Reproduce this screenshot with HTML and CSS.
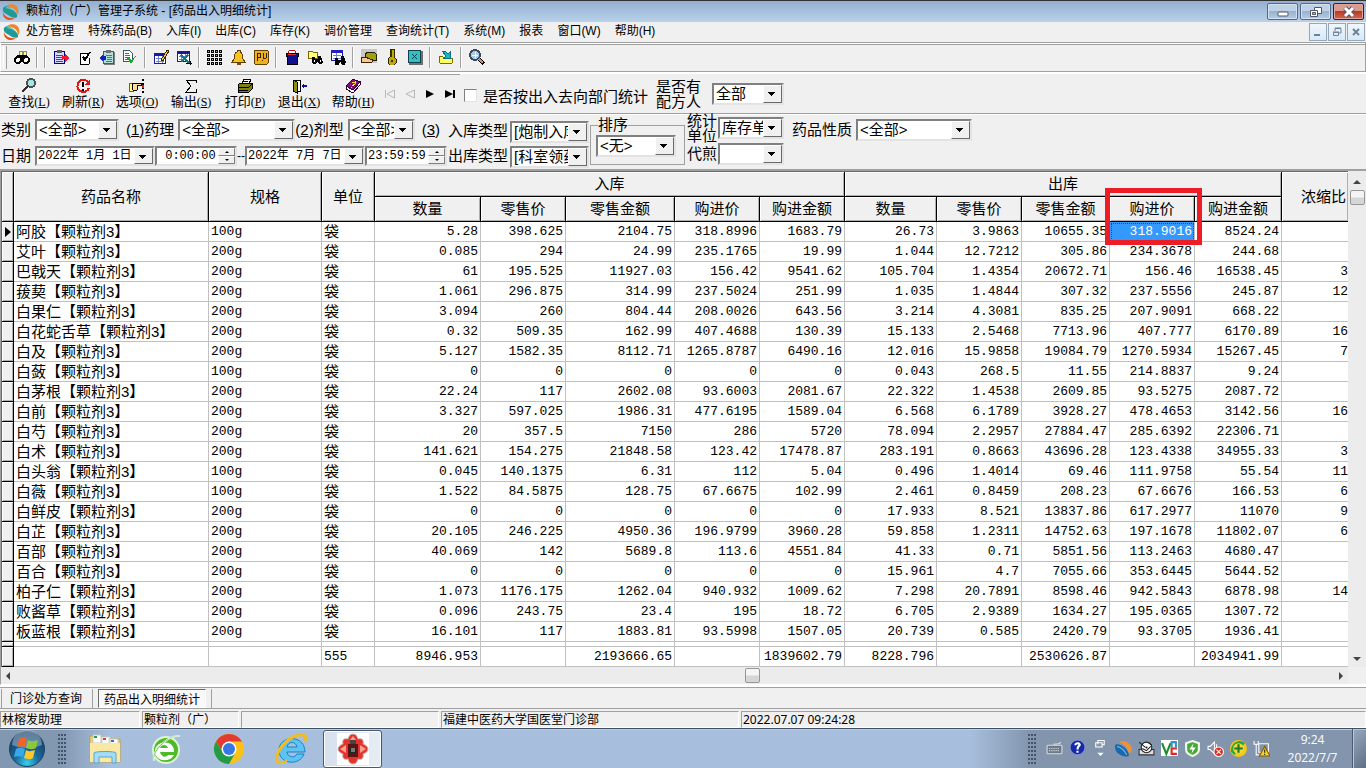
FILE: index.html
```
<!DOCTYPE html>
<html lang="zh-CN">

<head>
    <meta charset="UTF-8">
    <title>颗粒剂（广）管理子系统</title>
    <link rel="stylesheet" href="styles.css">
</head>

<body>
    <header class="titlebar">
        <svg class="logo" viewBox="0 0 18 18"><path d="M4 3C8 0 15 1 16 6c1 3 0 5-1 6 0-5-4-8-11-9z" fill="#f0852b"/><path d="M1 5c2-3 6-2 9 1s6 5 5 8c-3 2-6 0-9-2S0 9 1 5z" fill="#1f9a94"/><path d="M1 9c1 4 6 7 12 6-4 4-13 2-12-6z" fill="#e8501e"/><path d="M3 5c3-2 7 0 9 3-3-2-6-3-9-3z" fill="#7fd3c4"/></svg>
        <h1>颗粒剂（广）管理子系统 - [药品出入明细统计]</h1>
        <div class="win-buttons">
            <button type="button" aria-label="最小化"><svg viewBox="0 0 30 16"><rect x="10" y="8" width="10" height="4" rx="1" fill="#fff" stroke="#535666"/></svg></button>
            <button type="button" aria-label="还原"><svg viewBox="0 0 30 16"><path d="M13.500 3.500h7v6h-7z" fill="#fff" stroke="#535666"/><path d="M9.500 6.500h7v6h-7z" fill="#fff" stroke="#535666"/><path d="M11.500 8.500h3v2h-3z" fill="#9db8d5" stroke="#535666"/></svg></button>
            <button type="button" class="close" aria-label="关闭"><svg viewBox="0 0 30 16"><path d="M11 4l8 8M19 4l-8 8" stroke="#535666" stroke-width="5"/><path d="M11 4l8 8M19 4l-8 8" stroke="#fff" stroke-width="3"/></svg></button>
        </div>
    </header>

    <nav class="menubar">
        <svg class="logo" viewBox="0 0 18 18"><path d="M4 3C8 0 15 1 16 6c1 3 0 5-1 6 0-5-4-8-11-9z" fill="#f0852b"/><path d="M1 5c2-3 6-2 9 1s6 5 5 8c-3 2-6 0-9-2S0 9 1 5z" fill="#1f9a94"/><path d="M1 9c1 4 6 7 12 6-4 4-13 2-12-6z" fill="#e8501e"/><path d="M3 5c3-2 7 0 9 3-3-2-6-3-9-3z" fill="#7fd3c4"/></svg>
        <a href="#">处方管理</a>
        <a href="#">特殊药品(B)</a>
        <a href="#">入库(I)</a>
        <a href="#">出库(C)</a>
        <a href="#">库存(K)</a>
        <a href="#">调价管理</a>
        <a href="#">查询统计(T)</a>
        <a href="#">系统(M)</a>
        <a href="#">报表</a>
        <a href="#">窗口(W)</a>
        <a href="#">帮助(H)</a>
        <div class="mdi-buttons">
            <button type="button" aria-label="最小化窗口"><svg viewBox="0 0 16 16"><path d="M4 10h6v2H4z" fill="#6f8296"/></svg></button>
            <button type="button" aria-label="还原窗口"><svg viewBox="0 0 16 16"><path d="M6 7V4.500h6V9h-2M6 4h6" fill="none" stroke="#6f8296"/><path d="M4.500 8.500h5v3h-5zM4 8h6" fill="none" stroke="#6f8296"/></svg></button>
            <button type="button" aria-label="关闭窗口"><svg viewBox="0 0 16 16"><path d="M5 5l6 6M11 5l-6 6" stroke="#6f8296" stroke-width="2"/></svg></button>
        </div>
    </nav>

    <div class="iconbar">
        <button type="button" aria-label="查找"><svg viewBox="0 0 16 16"><path d="M5 2h3v4H5zM9 2h3v4H9z" fill="#ffff80" stroke="#888"/><path d="M3 6h10v3H3z" fill="#000"/><circle cx="4" cy="11" r="3" fill="#fff" stroke="#000" stroke-width="2"/><circle cx="12" cy="11" r="3" fill="#fff" stroke="#000" stroke-width="2"/></svg></button>
        <i class="sep"></i><i class="sep"></i>
        <button type="button" aria-label="单据"><svg viewBox="0 0 16 16"><path d="M1.500 2.500h10v12h-10z" fill="#d8d8ff" stroke="#000080"/><path d="M4 1h5v3H4z" fill="#606060"/><path d="M3 6h7M3 8h6M3 10h7M3 12h7" stroke="#4040c0"/><path d="M9 7h3V5l4 4-4 4v-3H9z" fill="#f01830"/></svg></button>
        <button type="button" aria-label="审核"><svg viewBox="0 0 16 16"><path d="M13 4H4v11h9" fill="#fff" stroke="#000"/><path d="M6 8l3 5 6-10-2 0-4 6-1-2z" fill="#000"/><path d="M13 9v6" stroke="#000"/></svg></button>
        <button type="button" aria-label="导入"><svg viewBox="0 0 16 16"><path d="M5 3h11v13H5z" fill="#808080"/><path d="M4.500 2.500h10v12h-10z" fill="#b0e0d8" stroke="#406060"/><path d="M7 1h5v3H7z" fill="#707070"/><path d="M7 6h6M8 8h5M8 10h5M7 12h6" stroke="#408078"/><path d="M7 7H4V5L0 9l4 4v-2h3z" fill="#1020c0"/></svg></button>
        <button type="button" aria-label="确认"><svg viewBox="0 0 16 16"><path d="M1.500 1.500h6l3 3v8h-9z" fill="#fff" stroke="#306060"/><path d="M3 4h4M3 6h5M3 8h5M3 10h4" stroke="#307878"/><path d="M5 9l4 6 7-11-7 7-2-3z" fill="#10b020"/></svg></button>
        <i class="sep"></i>
        <button type="button" aria-label="编辑"><svg viewBox="0 0 16 16"><path d="M1.500 4.500h11v10h-11z" fill="#fff" stroke="#1818a0"/><path d="M1 4h12v3H1z" fill="#1818a0"/><path d="M3 9h8M3 12h8M5 7v7M9 7v7" stroke="#7080d0"/><path d="M8 11l6-10 2 1-6 10z" fill="#f0d020" stroke="#402000"/></svg></button>
        <button type="button" aria-label="报表设计"><svg viewBox="0 0 16 16"><path d="M1.500 2.500h12v10h-12z" fill="#fff" stroke="#1818a0"/><path d="M1 2h13v3H1z" fill="#1818a0"/><path d="M3 7h9M3 10h8M5 5v7M9 5v7" stroke="#7080d0"/><path d="M5 6l9 9M12 6l-7 7" stroke="#008080" stroke-width="2"/><path d="M10 14h6M14 12v4" stroke="#000"/></svg></button>
        <i class="sep"></i>
        <button type="button" aria-label="药柜"><svg viewBox="0 0 16 16"><path d="M0 2h16M0 6h16M0 10h16M0 14h16" stroke="#000" stroke-width="3" stroke-dasharray="3 1"/><path d="M1 2h16M1 6h16M1 10h16M1 14h16" stroke="#f0a030" stroke-dasharray="1 3"/></svg></button>
        <button type="button" aria-label="提醒"><svg viewBox="0 0 16 16"><path d="M7 1h3v2c3 1 3 4 3 7l2 3H2l2-3c0-3 0-6 3-7z" fill="#f8c020" stroke="#604000"/><path d="M7 14h4v2H7z" fill="#805000"/></svg></button>
        <button type="button" aria-label="PV"><svg viewBox="0 0 16 16"><rect x="1" y="1" width="14" height="14" rx="1" fill="#f0b020" stroke="#604000"/><path d="M4 12V4h3v4H4M9 11h1M10 4v5l2 1 1-1V4" fill="none" stroke="#302000"/></svg></button>
        <i class="sep"></i>
        <button type="button" aria-label="药桶"><svg viewBox="0 0 16 16"><path d="M4 4c0-4 8-4 8 0" fill="#fff" stroke="#c01010"/><path d="M2 4h12v3h-1v8H3V7H2z" fill="#101090" stroke="#000"/><path d="M4 5h8" stroke="#e03030"/></svg></button>
        <button type="button" aria-label="查找单据"><svg viewBox="0 0 16 16"><path d="M1 2h4l1 1h4v6H1z" fill="#ffff80" stroke="#806000"/><path d="M5 8h3v2h3V7h3l2 6-1 2h-3l-1-2h-1l-1 2H6l-1-3z" fill="#000"/><path d="M7 11h1v2H7zM13 11h1v2h-1z" fill="#fff"/></svg></button>
        <button type="button" aria-label="查找报表"><svg viewBox="0 0 16 16"><path d="M1.500 1.500h11v10h-11z" fill="#fff" stroke="#1818a0"/><path d="M1 1h12v3H1z" fill="#2020c0"/><path d="M3 6h8M3 9h8M6 4v7" stroke="#7080d0"/><path d="M5 9h3v2h3V7h3l2 6-1 3h-3l-1-3h-1l-1 3H5z" fill="#000"/></svg></button>
        <i class="sep"></i>
        <button type="button" aria-label="钱包"><svg viewBox="0 0 16 16"><path d="M0 0h16v14H0z" fill="#c8c8c8"/><path d="M4 5l3-2h6l2 2v6H4z" fill="#a0a010" stroke="#202000"/><path d="M0 9l4-1 5 2 3 1-1 2H0z" fill="#f8c890" stroke="#402000"/></svg></button>
        <button type="button" aria-label="锁定"><svg viewBox="0 0 16 16"><path d="M6 0h4v8l2 2v4l-2 2H6l-2-2v-4l2-2z" fill="#c0a810" stroke="#302800"/><path d="M7 11h2v2H7zM7 1h1v7H7z" fill="#403800"/></svg></button>
        <button type="button" aria-label="关闭"><svg viewBox="0 0 16 16"><path d="M2 2h14v14H2z" fill="#707070"/><path d="M1.500 1.500h12v12h-12z" fill="#30c0c0" stroke="#104050"/><path d="M5 5l5 5M10 5l-5 5" stroke="#104050"/></svg></button>
        <i class="sep"></i>
        <button type="button" aria-label="打开"><svg viewBox="0 0 16 16"><path d="M1 7h3l2 2h9l-1 5H2z" fill="#ffff60" stroke="#806800"/><path d="M4 2h3l3 3 2-2v6H6l2-2z" fill="#10b8c0" stroke="#087080"/></svg></button>
        <i class="sep"></i>
        <button type="button" aria-label="放大"><svg viewBox="0 0 16 16"><circle cx="6" cy="6" r="5" fill="#a8c8e8" stroke="#404860" stroke-width="2"/><path d="M6 3v6M3 6h6" stroke="#f8fcff"/><path d="M10 10l5 5" stroke="#000" stroke-width="4"/><path d="M10 10l4 4" stroke="#d09070" stroke-width="2"/></svg></button>
    </div>

    <div class="actionbar">
        <div class="actions">
            <button type="button"><svg viewBox="0 0 16 16"><circle cx="10" cy="5" r="4" fill="#a0e8e8" stroke="#505050" stroke-width="2"/><path d="M7 8l-6 6" stroke="#303030" stroke-width="2"/></svg><span>查找<small>(<u>L</u>)</small></span></button>
            <button type="button"><svg viewBox="0 0 16 16"><path d="M13 4A6 6 0 1 0 14 10" fill="none" stroke="#f01010" stroke-width="2"/><path d="M15 1v6H9z" fill="#f01010"/><path d="M8 4v5M8 11v2" stroke="#000" stroke-width="2"/></svg><span>刷新<small>(<u>R</u>)</small></span></button>
            <button type="button"><svg viewBox="0 0 16 16"><path d="M0 5h4v8H0z" fill="#ffff80" stroke="#806000"/><path d="M3 6l3-1h6v2H8l1 2-1 3H4z" fill="#f8e090" stroke="#000"/><path d="M14 1v14" stroke="#000" stroke-width="2" stroke-dasharray="2 2"/><path d="M14 7v3" stroke="#f01010" stroke-width="2"/></svg><span>选项<small>(<u>O</u>)</small></span></button>
            <button type="button"><svg viewBox="0 0 16 16"><path d="M13 5V2H3l5 6-5 6h10v-3" fill="none" stroke="#000"/></svg><span>输出<small>(<u>S</u>)</small></span></button>
            <button type="button"><svg viewBox="0 0 16 16"><path d="M5 6l2-5h7l-2 5z" fill="#fff" stroke="#000"/><path d="M7 3h4M6 5h4" stroke="#000"/><path d="M1 7l2-2h12v6l-3 3H1z" fill="#808010" stroke="#000"/><path d="M1 9h11M2 12h9M12 9l3-3" stroke="#000"/></svg><span>打印<small>(<u>P</u>)</small></span></button>
            <button type="button"><svg viewBox="0 0 16 16"><path d="M2 2h7v11H2" fill="#fff" stroke="#000"/><path d="M2 2l4 2v11l-4-2z" fill="#909010" stroke="#000"/><path d="M11 8h5" stroke="#1010a0" stroke-width="2"/><path d="M10 8l3-3v6z" fill="#1010a0"/></svg><span>退出<small>(<u>X</u>)</small></span></button>
            <button type="button"><svg viewBox="0 0 16 16"><path d="M1 8l7-7 7 3-7 8z" fill="#801080" stroke="#300030"/><path d="M1 8v3l7 4 7-8V4l-7 8z" fill="#fff" stroke="#300030"/><path d="M7 5l3-1v2L7 8M6 9h1" fill="none" stroke="#ffe020"/></svg><span>帮助<small>(<u>H</u>)</small></span></button>
        </div>
        <div class="record-nav">
            <button type="button" disabled aria-label="首条"><svg viewBox="0 0 12 10"><path d="M1.500 1v8M10.500 1v8L3 5z" fill="none" stroke="#b8b8b8"/></svg></button>
            <button type="button" disabled aria-label="上一条"><svg viewBox="0 0 12 10"><path d="M10.500 1v8L2 5z" fill="none" stroke="#b8b8b8"/></svg></button>
            <button type="button" aria-label="下一条"><svg viewBox="0 0 12 10"><path d="M2 1l8 4-8 4z"/></svg></button>
            <button type="button" aria-label="末条"><svg viewBox="0 0 12 10"><path d="M1 1l8 4-8 4zM9 1h2v8H9z"/></svg></button>
        </div>
        <label class="check"><input type="checkbox">是否按出入去向部门统计</label>
        <label class="two-line" for="formula">是否有<br>配方人</label>
        <div class="combo formula"><select id="formula"><option>全部</option></select></div>
    </div>

    <form class="filters">
        <div class="filter-main">
            <div class="filter-row">
                <label for="category">类别</label>
                <div class="combo category"><select id="category"><option>&lt;全部&gt;</option></select></div>
                <label class="lead" for="effect">(<u>1</u>)药理</label>
                <div class="combo effect"><select id="effect"><option>&lt;全部&gt;</option></select></div>
                <label for="dosage">(<u>2</u>)剂型</label>
                <div class="combo dosage"><select id="dosage"><option>&lt;全部&gt;</option></select></div>
                <span class="lead">(<u>3</u>)</span>
            </div>
            <div class="filter-row dates">
                <label for="date-from">日期</label>
                <div class="combo date"><input type="text" id="date-from" value="2022年 1月 1日"></div>
                <div class="spin"><input type="text" aria-label="开始时间" value=" 0:00:00"><span class="spin-buttons"><button type="button" aria-label="增加"></button><button type="button" class="down" aria-label="减少"></button></span></div>
                <span class="dash">--</span>
                <div class="combo date"><input type="text" aria-label="结束日期" value="2022年 7月 7日"></div>
                <div class="spin"><input type="text" aria-label="结束时间" value="23:59:59"><span class="spin-buttons"><button type="button" aria-label="增加"></button><button type="button" class="down" aria-label="减少"></button></span></div>
            </div>
        </div>
        <div class="filter-types">
            <label for="in-type">入库类型</label>
            <div class="combo"><select id="in-type"><option>[炮制入库]</option></select></div>
            <label for="out-type">出库类型</label>
            <div class="combo"><select id="out-type"><option>[科室领药]</option></select></div>
        </div>
        <fieldset class="sort">
            <legend>排序</legend>
            <div class="combo"><select aria-label="排序"><option>&lt;无&gt;</option></select></div>
        </fieldset>
        <div class="filter-stat">
            <label class="two-line" for="stat-unit">统计<br>单位</label>
            <div class="combo"><select id="stat-unit"><option>库存单位</option></select></div>
            <label for="decoct">代煎</label>
            <div class="combo"><select id="decoct"><option></option></select></div>
        </div>
        <div class="filter-row nature">
            <label for="nature">药品性质</label>
            <div class="combo"><select id="nature"><option>&lt;全部&gt;</option></select></div>
        </div>
    </form>

    <main class="grid">
        <div class="grid-view">
            <table>
                <colgroup>
                    <col class="w-mark"><col class="w-name"><col class="w-spec"><col class="w-unit">
                    <col class="w-in-qty"><col class="w-price"><col class="w-in-sum"><col class="w-price"><col class="w-price">
                    <col class="w-out-qty"><col class="w-price"><col class="w-out-sum"><col class="w-price"><col class="w-out-buy">
                    <col>
                </colgroup>
                <thead>
                    <tr>
                        <th rowspan="2"></th><th rowspan="2">药品名称</th><th rowspan="2">规格</th><th rowspan="2">单位</th>
                        <th colspan="5">入库</th><th colspan="5">出库</th><th rowspan="2" class="ratio">浓缩比</th>
                    </tr>
                    <tr>
                        <th>数量</th><th>零售价</th><th>零售金额</th><th>购进价</th><th>购进金额</th>
                        <th>数量</th><th>零售价</th><th>零售金额</th><th>购进价</th><th>购进金额</th>
                    </tr>
                </thead>
                <tbody>
                    <tr><th class="current"></th><td>阿胶【颗粒剂3】</td><td>100g</td><td>袋</td><td>5.28</td><td>398.625</td><td>2104.75</td><td>318.8996</td><td>1683.79</td><td>26.73</td><td>3.9863</td><td>10655.35</td><td class="selected">318.9016<span class="marker"></span></td><td>8524.24</td><td></td></tr>
                    <tr><th></th><td>艾叶【颗粒剂3】</td><td>200g</td><td>袋</td><td>0.085</td><td>294</td><td>24.99</td><td>235.1765</td><td>19.99</td><td>1.044</td><td>12.7212</td><td>305.86</td><td>234.3678</td><td>244.68</td><td></td></tr>
                    <tr><th></th><td>巴戟天【颗粒剂3】</td><td>200g</td><td>袋</td><td>61</td><td>195.525</td><td>11927.03</td><td>156.42</td><td>9541.62</td><td>105.704</td><td>1.4354</td><td>20672.71</td><td>156.46</td><td>16538.45</td><td>3</td></tr>
                    <tr><th></th><td>菝葜【颗粒剂3】</td><td>200g</td><td>袋</td><td>1.061</td><td>296.875</td><td>314.99</td><td>237.5024</td><td>251.99</td><td>1.035</td><td>1.4844</td><td>307.32</td><td>237.5556</td><td>245.87</td><td>12</td></tr>
                    <tr><th></th><td>白果仁【颗粒剂3】</td><td>200g</td><td>袋</td><td>3.094</td><td>260</td><td>804.44</td><td>208.0026</td><td>643.56</td><td>3.214</td><td>4.3081</td><td>835.25</td><td>207.9091</td><td>668.22</td><td></td></tr>
                    <tr><th></th><td>白花蛇舌草【颗粒剂3】</td><td>200g</td><td>袋</td><td>0.32</td><td>509.35</td><td>162.99</td><td>407.4688</td><td>130.39</td><td>15.133</td><td>2.5468</td><td>7713.96</td><td>407.777</td><td>6170.89</td><td>16</td></tr>
                    <tr><th></th><td>白及【颗粒剂3】</td><td>200g</td><td>袋</td><td>5.127</td><td>1582.35</td><td>8112.71</td><td>1265.8787</td><td>6490.16</td><td>12.016</td><td>15.9858</td><td>19084.79</td><td>1270.5934</td><td>15267.45</td><td>7</td></tr>
                    <tr><th></th><td>白蔹【颗粒剂3】</td><td>100g</td><td>袋</td><td>0</td><td>0</td><td>0</td><td>0</td><td>0</td><td>0.043</td><td>268.5</td><td>11.55</td><td>214.8837</td><td>9.24</td><td></td></tr>
                    <tr><th></th><td>白茅根【颗粒剂3】</td><td>200g</td><td>袋</td><td>22.24</td><td>117</td><td>2602.08</td><td>93.6003</td><td>2081.67</td><td>22.322</td><td>1.4538</td><td>2609.85</td><td>93.5275</td><td>2087.72</td><td></td></tr>
                    <tr><th></th><td>白前【颗粒剂3】</td><td>200g</td><td>袋</td><td>3.327</td><td>597.025</td><td>1986.31</td><td>477.6195</td><td>1589.04</td><td>6.568</td><td>6.1789</td><td>3928.27</td><td>478.4653</td><td>3142.56</td><td>16</td></tr>
                    <tr><th></th><td>白芍【颗粒剂3】</td><td>200g</td><td>袋</td><td>20</td><td>357.5</td><td>7150</td><td>286</td><td>5720</td><td>78.094</td><td>2.2957</td><td>27884.47</td><td>285.6392</td><td>22306.71</td><td></td></tr>
                    <tr><th></th><td>白术【颗粒剂3】</td><td>200g</td><td>袋</td><td>141.621</td><td>154.275</td><td>21848.58</td><td>123.42</td><td>17478.87</td><td>283.191</td><td>0.8663</td><td>43696.28</td><td>123.4338</td><td>34955.33</td><td>3</td></tr>
                    <tr><th></th><td>白头翁【颗粒剂3】</td><td>100g</td><td>袋</td><td>0.045</td><td>140.1375</td><td>6.31</td><td>112</td><td>5.04</td><td>0.496</td><td>1.4014</td><td>69.46</td><td>111.9758</td><td>55.54</td><td>11</td></tr>
                    <tr><th></th><td>白薇【颗粒剂3】</td><td>100g</td><td>袋</td><td>1.522</td><td>84.5875</td><td>128.75</td><td>67.6675</td><td>102.99</td><td>2.461</td><td>0.8459</td><td>208.23</td><td>67.6676</td><td>166.53</td><td>6</td></tr>
                    <tr><th></th><td>白鲜皮【颗粒剂3】</td><td>200g</td><td>袋</td><td>0</td><td>0</td><td>0</td><td>0</td><td>0</td><td>17.933</td><td>8.521</td><td>13837.86</td><td>617.2977</td><td>11070</td><td>9</td></tr>
                    <tr><th></th><td>白芷【颗粒剂3】</td><td>200g</td><td>袋</td><td>20.105</td><td>246.225</td><td>4950.36</td><td>196.9799</td><td>3960.28</td><td>59.858</td><td>1.2311</td><td>14752.63</td><td>197.1678</td><td>11802.07</td><td>6</td></tr>
                    <tr><th></th><td>百部【颗粒剂3】</td><td>200g</td><td>袋</td><td>40.069</td><td>142</td><td>5689.8</td><td>113.6</td><td>4551.84</td><td>41.33</td><td>0.71</td><td>5851.56</td><td>113.2463</td><td>4680.47</td><td></td></tr>
                    <tr><th></th><td>百合【颗粒剂3】</td><td>200g</td><td>袋</td><td>0</td><td>0</td><td>0</td><td>0</td><td>0</td><td>15.961</td><td>4.7</td><td>7055.66</td><td>353.6445</td><td>5644.52</td><td></td></tr>
                    <tr><th></th><td>柏子仁【颗粒剂3】</td><td>200g</td><td>袋</td><td>1.073</td><td>1176.175</td><td>1262.04</td><td>940.932</td><td>1009.62</td><td>7.298</td><td>20.7891</td><td>8598.46</td><td>942.5843</td><td>6878.98</td><td>14</td></tr>
                    <tr><th></th><td>败酱草【颗粒剂3】</td><td>200g</td><td>袋</td><td>0.096</td><td>243.75</td><td>23.4</td><td>195</td><td>18.72</td><td>6.705</td><td>2.9389</td><td>1634.27</td><td>195.0365</td><td>1307.72</td><td></td></tr>
                    <tr><th></th><td>板蓝根【颗粒剂3】</td><td>200g</td><td>袋</td><td>16.101</td><td>117</td><td>1883.81</td><td>93.5998</td><td>1507.05</td><td>20.739</td><td>0.585</td><td>2420.79</td><td>93.3705</td><td>1936.41</td><td></td></tr>
                </tbody>
                <tfoot>
                    <tr class="gap-row"><th></th><td></td><td></td><td></td><td></td><td></td><td></td><td></td><td></td><td></td><td></td><td></td><td></td><td></td><td></td></tr>
                    <tr><th></th><td></td><td></td><td class="count">555</td><td>8946.953</td><td></td><td>2193666.65</td><td></td><td>1839602.79</td><td>8228.796</td><td></td><td>2530626.87</td><td></td><td>2034941.99</td><td></td></tr>
                </tfoot>
            </table>
        </div>
        <div class="vscroll"><i class="arrow up"></i><i class="thumb"></i><i class="arrow down"></i></div>
        <div class="hscroll"><i class="arrow left"></i><i class="thumb"></i><i class="arrow right"></i></div>
    </main>

    <div class="tabs">
        <button type="button">门诊处方查询</button>
        <button type="button" class="active">药品出入明细统计</button>
    </div>

    <div class="statusbar">
        <span class="user">林榕发助理</span>
        <span class="module">颗粒剂（广）</span>
        <span class="blank"></span>
        <span class="dept">福建中医药大学国医堂门诊部</span>
        <span class="time">2022.07.07 09:24:28</span>
    </div>

    <footer class="taskbar">
        <button type="button" class="start" aria-label="开始">
            <svg viewBox="0 0 38 38"><defs><radialGradient id="orb" cx="50%" cy="90%" r="85%"><stop offset="0" stop-color="#38d0f0"/><stop offset=".4" stop-color="#1a6a9c"/><stop offset="1" stop-color="#15395f"/></radialGradient></defs><circle cx="19" cy="19" r="17.500" fill="url(#orb)" stroke="#1c4163"/><path d="M4 15a15 15 0 0 1 30 0c-9 4-21 4-30 0z" fill="#a9c5da" opacity=".5"/><path d="M11 9c3-2 6-1 8 0l-2 8c-3-1-5-1-8 0z" fill="#f06428"/><path d="M20 10c3 2 7 1 10 0l-2 8c-4 2-7 1-10 0z" fill="#8cc83c"/><path d="M8 19c3-2 6-1 9 0l-2 8c-3-1-6-1-9 0z" fill="#38a8e8"/><path d="M18 20c3 2 6 1 9 0l-2 8c-3 2-6 1-9 0z" fill="#fcc828"/></svg>
        </button>
        <i class="grip"></i>
        <button type="button" class="task" aria-label="资源管理器"><svg viewBox="0 0 34 34"><path d="M2 4h11l3 3h16v23H2z" fill="#ecd27a" stroke="#c5a245"/><path d="M5 3h8v8H5zM14 5h8v7h-8zM21 7h9v7h-9z" fill="#fff" stroke="#c8c8b8"/><path d="M6 4h3v2H6z" fill="#20a040"/><path d="M15 6h3v2h-3z" fill="#e04020"/><path d="M23 8h3v2h-3z" fill="#3070d0"/><path d="M2 11h30v19H2z" fill="#f9e9a5"/><path d="M6 31V21c0-2 22-2 22 0v10h-4v-6H11v6z" fill="#a4dcf4" stroke="#5aa5cc"/></svg></button>
        <button type="button" class="task" aria-label="安全浏览器"><svg viewBox="0 0 34 34"><circle cx="16" cy="18" r="13" fill="#4dba28" stroke="#dff3d5" stroke-width="2"/><path d="M24 20H10c1 5 6 6 8 3h6c-4 8-19 7-19-4s20-12 19 1zM10 16h8c-1-4-7-4-8 0z" fill="#fff"/><path d="M4 29C-1 20 19 1 30 4c-10 0-22 10-25 19z" fill="#35a51a" stroke="#e8f8e0"/></svg></button>
        <button type="button" class="task" aria-label="Chrome"><svg viewBox="0 0 34 34"><circle cx="17" cy="17" r="15" fill="#fbc116"/><path d="M4 9.500a15 15 0 0 1 26 0H17l-6 11z" fill="#e33b2e"/><path d="M4 9.500A15 15 0 0 0 17 32l6.500-11.500H11z" fill="#229c48"/><circle cx="17" cy="17" r="7.500" fill="#fff"/><circle cx="17" cy="17" r="6" fill="#3577e5"/></svg></button>
        <button type="button" class="task" aria-label="Internet Explorer"><svg viewBox="0 0 34 34"><path d="M31 20H13c1 6 8 6 10 2h7C26 34 5 33 5 18S31 2 31 20zM13 15h10c-1-6-9-6-10 0z" fill="#5cc3f2" stroke="#1b82c4"/><path d="M5 31C-4 26 14 0 30 3c2 1 2 3 1 6" fill="none" stroke="#f2bc1d" stroke-width="3"/><path d="M5 31c3 1 6-1 8-3" fill="none" stroke="#f2bc1d" stroke-width="2"/></svg></button>
        <button type="button" class="task running" aria-label="颗粒剂管理子系统"><svg viewBox="0 0 34 34"><path d="M1 1h32v32H1z" fill="#fff"/><path d="M17 2c3 0 4 2 5 5 4-1 6 1 5 5 3 1 5 3 5 5s-2 4-5 5c1 4-1 6-5 5-1 3-2 5-5 5s-4-2-5-5c-4 1-6-1-5-5-3-1-5-3-5-5s2-4 5-5c-1-4 1-6 5-5 1-3 2-5 5-5z" fill="#e4332c" stroke="#c8b0b0"/><path d="M17 4l3 4h-6zM30 17l-6 4v-8zM4 17l6-4v8z" fill="#f9a090"/><path d="M14 8h6v4h-6z" fill="#444"/><path d="M12 12h10v13H12z" fill="#571515"/><path d="M14 16h6v5h-6z" fill="#222"/><path d="M15 17h4M15 19h4" stroke="#ccc"/></svg></button>

        <div class="tray">
            <i class="grip"></i>
            <span><svg viewBox="0 0 16 16"><path d="M7 4c3-1 5 1 7-2" fill="none" stroke="#ddd"/><rect x="1" y="5" width="14" height="8" rx="1" fill="#6c7a8a" stroke="#ddd"/><path d="M3 8h10M3 10h10" stroke="#ddd" stroke-dasharray="1 1"/></svg></span>
            <span><svg viewBox="0 0 16 16"><circle cx="8" cy="7" r="7" fill="#1428a8" stroke="#8090d0"/><path d="M6 5c0-3 5-2 4 0-1 1-2 1-2 4M8 10v2" fill="none" stroke="#fff" stroke-width="2"/></svg></span>
            <span><svg viewBox="0 0 16 16"><path d="M5.500 4V.500h6v4H9M3.500 2.500h6v4h-6z" fill="none" stroke="#fff"/><path d="M5 12h6l-3 3z" fill="#fff"/></svg></span>
            <span><svg viewBox="0 0 16 16"><path d="M4 2c4-3 11 0 12 7-1 3-3 4-4 4 1-6-4-9-8-11z" fill="#f09038"/><path d="M0 5c3-4 14 4 13 10C8 17-1 13 0 5z" fill="#1868b0"/><path d="M2 6c4 1 7 4 9 8" stroke="#70b8e8" fill="none"/></svg></span>
            <span><svg viewBox="0 0 16 16"><path d="M1 9h14v5H1z" fill="#ddd" stroke="#333"/><circle cx="8" cy="7" r="5" fill="#fff" stroke="#222"/><path d="M1 2l6 5M9 2l4 3M4 8l4 2 4-4" stroke="#222" fill="none"/><circle cx="8" cy="7" r="1" fill="#222"/></svg></span>
            <span><svg viewBox="0 0 16 16"><path d="M0 0h16v15H0z" fill="#fff"/><path d="M1 3l4 10 4-10" fill="none" stroke="#18902c" stroke-width="2"/><path d="M10 7V2h4v5" fill="none" stroke="#3090d0" stroke-width="2"/><path d="M15 8h-5v5h5" fill="none" stroke="#e02828" stroke-width="2"/></svg></span>
            <span><svg viewBox="0 0 16 16"><path d="M8 1l6 2v6c0 3-3 5-6 6-3-1-6-3-6-6V3z" fill="#46a836" stroke="#f0f8e8" stroke-width="2"/><path d="M9 3L5 9h3l-1 4 4-6H8z" fill="#fff"/></svg></span>
            <span><svg viewBox="0 0 16 16"><path d="M1 6h2l4-4v11l-4-4H1z" fill="none" stroke="#fff"/><path d="M9 4v7" stroke="#fff"/><circle cx="11" cy="11" r="4.500" fill="#d83020" stroke="#fff"/><path d="M9 9l4 4M13 9l-4 4" stroke="#fff"/></svg></span>
            <span><svg viewBox="0 0 16 16"><circle cx="8" cy="8" r="8" fill="#f4c818"/><path d="M1 11C0 3 9-2 14 3L4 14z" fill="#2fa43c"/><circle cx="8" cy="8" r="5" fill="#f4d838"/><path d="M8 4v8M4 8h8" stroke="#187828" stroke-width="2"/></svg></span>
            <span><svg viewBox="0 0 16 16"><path d="M5.500 3.500h9v8h-9z" fill="#8093aa" stroke="#fff"/><path d="M1 1v3h4V1M3 4v10h3" fill="none" stroke="#fff"/><path d="M11 6l5 9H6z" fill="#fcd020" stroke="#806000"/><path d="M11 9v3M11 13v1" stroke="#222"/></svg></span>
            <div class="clock">9:24<br>2022/7/7</div>
            <button type="button" class="desktop" aria-label="显示桌面"></button>
        </div>
    </footer>
</body>

</html>
```
FILE: styles.css
```
* {
    margin: 0;
    padding: 0;
    box-sizing: border-box;
}

body {
    font-family: "Liberation Sans", "Noto Sans CJK SC", sans-serif;
    font-size: 12px;
    background-color: #f0f0f0;
    color: #000;
    display: flex;
    flex-direction: column;
    min-height: 100vh;
    overflow: hidden;
    white-space: nowrap;
}

button {
    border: none;
    background: none;
    font: inherit;
    color: inherit;
    display: flex;
    align-items: center;
    justify-content: center;
}

svg {
    display: block;
    flex: none;
}

/* Title and menu */
.titlebar {
    display: flex;
    align-items: center;
    height: 22px;
    padding: 0 2px;
    border-top: 1px solid #333;
    background: linear-gradient(#93afd1, #b9d1ea);
}

.logo {
    width: 18px;
    height: 18px;
    margin-right: 6px;
}

.titlebar h1 {
    font-size: 12px;
    font-weight: normal;
    line-height: 20px;
    padding-bottom: 2px;
}

.win-buttons {
    display: flex;
    gap: 2px;
    margin-left: auto;
}

.win-buttons button {
    width: 31px;
    height: 17px;
    border: 1px solid #53698a;
    border-radius: 2px;
    box-shadow: inset 0 0 0 1px #d3e1f0;
    background: linear-gradient(#bed1e6 50%, #98b3d0 50%, #b5cce4);
}

.win-buttons svg {
    width: 30px;
    height: 16px;
}

.win-buttons .close {
    border-color: #4a1420;
    box-shadow: inset 0 0 0 1px #e0a59c;
    background: linear-gradient(#dc9a8e 50%, #b83a22 50%, #cf6a4f);
}

.menubar {
    display: flex;
    align-items: center;
    height: 20px;
    padding: 0 1px 0 3px;
}

.menubar .logo {
    margin-right: 5px;
}

.menubar a {
    color: #000;
    text-decoration: none;
    margin-right: 14px;
    line-height: 16px;
    padding-bottom: 2px;
}

.mdi-buttons {
    display: flex;
    gap: 1px;
    margin-left: auto;
}

.mdi-buttons button {
    width: 18px;
    height: 18px;
    border: 1px solid #94a7bb;
    background: linear-gradient(#f0f7fd, #d8e8f8);
}

.mdi-buttons svg {
    width: 16px;
    height: 16px;
}

/* Icon toolbar */
.iconbar {
    display: flex;
    align-items: center;
    height: 30px;
    padding-left: 2px;
    border: 1px solid #a0a0a0;
    border-left-color: #fff;
    box-shadow: inset 0 1px #fff, inset 0 2px #a0a0a0;
}

.iconbar::before {
    content: "";
    width: 2px;
    height: 23px;
    margin-right: 3px;
    border-right: 1px solid #a0a0a0;
    border-left: 1px solid #fff;
}

.iconbar button {
    width: 23px;
    height: 23px;
}

.iconbar svg,
.actions svg {
    width: 16px;
    height: 16px;
    shape-rendering: crispEdges;
}

.sep {
    width: 2px;
    height: 21px;
    margin: 0 3px;
    border-left: 1px solid #a0a0a0;
    border-right: 1px solid #fff;
}

/* Command bar */
.actionbar {
    display: flex;
    align-items: center;
    height: 41px;
    border-top: 2px solid #fff;
    font-size: 15px;
}

.actions,
.record-nav {
    display: flex;
    align-self: stretch;
    border-top: 1px solid #a0a0a0;
}

.actions {
    padding-left: 2px;
}

.actions button {
    flex-direction: column;
    width: 54px;
    font-size: 13px;
    line-height: 16px;
}

.actions small {
    font-family: "Liberation Serif", serif;
    font-size: 12px;
}

.record-nav button {
    width: 20px;
}

.record-nav svg {
    width: 12px;
    height: 10px;
}

.check {
    display: flex;
    align-items: center;
    gap: 6px;
    padding-top: 4px;
    margin: 0 8px 0 4px;
}

.check input {
    appearance: none;
    width: 13px;
    height: 13px;
    background-color: #fff;
    border: 1px solid;
    border-color: #808080 #e3e3e3 #e3e3e3 #808080;
}

.two-line {
    line-height: 15px;
}

/* Sunken combo boxes, date and time fields */
.combo,
.spin {
    position: relative;
    display: flex;
    height: 22px;
    background-color: #fff;
    border: 2px solid;
    border-color: #808080 #e3e3e3 #e3e3e3 #808080;
}

.combo select,
.combo input,
.spin input {
    appearance: none;
    flex: 1;
    min-width: 0;
    border: none;
    background: none;
    color: #000;
    font-family: "Liberation Sans", "Noto Sans CJK SC", sans-serif;
    font-size: 15px;
    line-height: 18px;
    padding: 0 17px 0 2px;
    overflow: hidden;
    outline: none;
}

.combo input,
.spin input {
    font-family: "Liberation Mono", "Noto Sans CJK SC", monospace;
    font-size: 12px;
    line-height: 16px;
    padding: 0 0 0 1px;
    white-space: pre;
}

.combo::after {
    content: "";
    position: absolute;
    top: 0;
    right: 0;
    bottom: 0;
    width: 17px;
    border: 1px solid;
    border-color: #fff #696969 #696969 #fff;
    background: linear-gradient(#000, #000) 4px 6px / 7px 1px no-repeat,
        linear-gradient(#000, #000) 5px 7px / 5px 1px no-repeat,
        linear-gradient(#000, #000) 6px 8px / 3px 1px no-repeat,
        linear-gradient(#000, #000) 7px 9px / 1px 1px no-repeat,
        #f0f0f0;
    pointer-events: none;
}

.formula {
    width: 72px;
    margin-left: 11px;
}

/* Filter area */
.filters {
    display: flex;
    height: 56px;
    border-top: 1px solid #a0a0a0;
    box-shadow: inset 0 1px #fff;
    font-size: 15px;
    line-height: 20px;
}

.filter-main {
    width: 448px;
    padding: 4px 0 0 1px;
}

.filter-row {
    display: flex;
    align-items: center;
    height: 24px;
}

.filter-row .combo {
    margin-left: 4px;
}

.filter-main .filter-row > label:first-child {
    width: 30px;
}

.lead {
    margin-left: 7px;
}

.category {
    width: 84px;
}

.effect {
    width: 117px;
}

.dosage {
    width: 67px;
}

.dates {
    margin-top: 2px;
}

.dates .combo,
.spin {
    margin-left: 0;
    height: 20px;
}

.dates .combo.date {
    width: 120px;
}

.dates .combo:nth-child(2) {
    margin-left: 4px;
}

.spin {
    width: 82px;
}

.dash {
    width: 8px;
    font-size: 12px;
}

.spin-buttons {
    display: flex;
    flex-direction: column;
    width: 17px;
}

.spin-buttons button {
    flex: 1;
    border: 1px solid;
    border-color: #fff #808080 #808080 #fff;
    background-color: #f0f0f0;
}

.spin-buttons button::before {
    content: "";
    border: 2px solid transparent;
    border-top: none;
    border-bottom: 2px solid #000;
}

.spin-buttons .down::before {
    border-top: 2px solid #000;
    border-bottom: none;
}

.filter-types {
    display: grid;
    grid-template-columns: 62px 79px;
    grid-template-rows: 22px 22px;
    row-gap: 3px;
    align-content: end;
    padding-bottom: 1px;
}

.sort {
    width: 95px;
    height: 48px;
    margin: 3px 0 0 1px;
    padding: 2px 5px 0;
    border: 1px solid #a0a0a0;
}

.sort legend {
    margin-left: 2px;
    line-height: 16px;
}

.sort .combo {
    width: 80px;
}

.filter-stat {
    display: grid;
    grid-template-columns: 31px 66px;
    grid-template-rows: 28px 24px;
    align-items: center;
    margin-left: 2px;
}

.nature {
    margin: 4px 0 0 8px;
}

.nature .combo {
    width: 116px;
}

/* Data grid */
.grid {
    flex: 1;
    display: grid;
    grid-template-columns: 1fr 18px;
    grid-template-rows: 1fr 17px;
    border-top: 2px solid #a0a0a0;
    border-left: 1px solid #a0a0a0;
    border-bottom: 1px solid #fff;
}

.grid-view {
    overflow: hidden;
    border-top: 1px solid #696969;
    border-left: 1px solid #696969;
    background-color: #fff;
}

table {
    width: 100%;
    table-layout: fixed;
    border-collapse: separate;
    border-spacing: 0;
}

.w-mark { width: 12px; }
.w-name { width: 195px; }
.w-spec { width: 113px; }
.w-unit { width: 53px; }
.w-price { width: 85px; }
.w-in-qty { width: 106px; }
.w-in-sum { width: 109px; }
.w-out-qty { width: 92px; }
.w-out-sum { width: 88px; }
.w-out-buy { width: 87px; }

th {
    font-size: 15px;
    font-weight: normal;
    line-height: 16px;
    background-color: #f0f0f0;
    border-right: 1px solid #000;
    border-bottom: 1px solid #000;
    box-shadow: inset 1px 1px #fff, inset -1px -1px #b0b0b0;
}

thead th {
    height: 25px;
}

th.ratio {
    text-align: left;
    padding-left: 19px;
    border-right: none;
}

td {
    height: 20px;
    padding: 0 2px;
    font-family: "Liberation Mono", "Noto Sans CJK SC", monospace;
    font-size: 13px;
    line-height: 16px;
    text-align: right;
    border-right: 1px solid #c0c0c0;
    border-bottom: 1px solid #c0c0c0;
}

td:nth-child(2),
td:nth-child(3),
td:nth-child(4) {
    text-align: left;
}

td:nth-child(2),
td:nth-child(4) {
    font-family: "Liberation Sans", "Noto Sans CJK SC", sans-serif;
    font-size: 15px;
}

td.count {
    font-family: "Liberation Mono", monospace;
    font-size: 13px;
}

td:last-child {
    padding-right: 0;
    border-right: none;
}

.gap-row th,
.gap-row td {
    height: 5px;
    padding: 0;
    line-height: 0;
}

.current::before {
    content: "";
    display: block;
    width: 0;
    margin-left: 3px;
    border: 5px solid transparent;
    border-left: 6px solid #000;
    border-right: none;
}

td.selected {
    position: relative;
    color: #fff;
    background-color: #3399ff;
    outline: 1px dotted #5a3a10;
    outline-offset: -2px;
}

/* Red frame round the selected price and its heading */
.marker {
    position: absolute;
    top: -34px;
    left: -5px;
    width: 97px;
    height: 57px;
    border: 5px solid #ee1c25;
}

.vscroll,
.hscroll {
    display: flex;
    align-items: center;
    background-color: #ececec;
}

.vscroll {
    flex-direction: column;
    padding: 9px 0 6px;
}

.hscroll {
    padding: 0 5px;
}

.thumb {
    width: 15px;
    height: 15px;
    border: 1px solid #979797;
    border-radius: 2px;
    background: linear-gradient(#f5f5f5 45%, #d6d6d8 55%);
}

.vscroll .thumb {
    margin: 6px 0 auto;
}

.hscroll .thumb {
    margin: 0 auto 0 55%;
}

.arrow {
    border: 4px solid transparent;
}

.up {
    border-top: none;
    border-bottom-color: #444;
}

.down.arrow {
    border-bottom: none;
    border-top-color: #444;
}

.left {
    border-left: none;
    border-right-color: #444;
}

.right {
    border-right: none;
    border-left-color: #444;
}

/* Window tabs and status bar */
.tabs {
    display: flex;
    align-items: center;
    height: 24px;
    padding: 3px 0 2px 1px;
    border-top: 1px solid #fff;
    box-shadow: inset 0 1px #fff, inset 0 2px #a0a0a0, inset 0 -1px #a0a0a0;
}

.tabs button {
    height: 19px;
    padding: 0 10px 2px 8px;
    border-left: 1px solid #a0a0a0;
    border-right: 1px solid #a0a0a0;
}

.tabs .active {
    padding: 0 5px;
    margin-left: 5px;
    border: 1px solid;
    border-color: #696969 #fff #fff #696969;
    background-color: #f8f8f8;
}

.tabs::after {
    content: "";
    height: 19px;
    margin-left: 5px;
    border-left: 1px solid #a0a0a0;
}

.statusbar {
    display: flex;
    gap: 2px;
    height: 19px;
    padding-top: 2px;
    line-height: 16px;
}

.statusbar span {
    padding-left: 1px;
    border: 1px solid;
    border-color: #a0a0a0 #fff #fff #a0a0a0;
}

.user { width: 140px; }
.module { width: 97px; }
.blank { width: 198px; }
.dept { width: 298px; }
.time { flex: 1; }

.statusbar .time {
    font-family: "Noto Sans", sans-serif;
}

/* Taskbar */
.taskbar {
    display: flex;
    align-items: center;
    height: 40px;
    border-top: 1px solid #3d4f66;
    box-shadow: inset 0 1px #c0d0e4;
    background: linear-gradient(90deg, #8297b0 60px, #a7bfdd 110px, #a7bfdd 970px, #8295ad 1030px);
}

.start {
    width: 54px;
}

.start svg {
    width: 38px;
    height: 38px;
}

.grip {
    width: 9px;
    height: 30px;
    background: radial-gradient(circle at 1px 1px, #44546a 1px, transparent 1px) 0 0 / 3px 4px;
}

.start + .grip {
    margin: 0 7px 0 4px;
}

.task {
    width: 62px;
    height: 38px;
}

.task svg {
    width: 34px;
    height: 34px;
}

.running {
    width: 59px;
    margin-left: 1px;
    border: 1px solid #47586f;
    border-radius: 3px;
    box-shadow: inset 0 0 0 1px #fff;
    background: linear-gradient(90deg, #d6e1ee, #e6edf5);
}

.tray {
    display: flex;
    align-items: center;
    align-self: stretch;
    margin-left: auto;
}

.tray .grip {
    margin-right: 6px;
}

.tray span {
    width: 23px;
}

.tray svg {
    width: 17px;
    height: 17px;
    margin: 0 auto;
}

.clock {
    width: 79px;
    color: #fff;
    font-family: "Open Sans", sans-serif;
    font-size: 12px;
    line-height: 18px;
    text-align: center;
}

.desktop {
    align-self: stretch;
    width: 14px;
    border-left: 1px solid #4a5b70;
    box-shadow: inset 1px 1px #b8c8da;
    background: linear-gradient(135deg, #98a9bd, #5e7086);
}
```
